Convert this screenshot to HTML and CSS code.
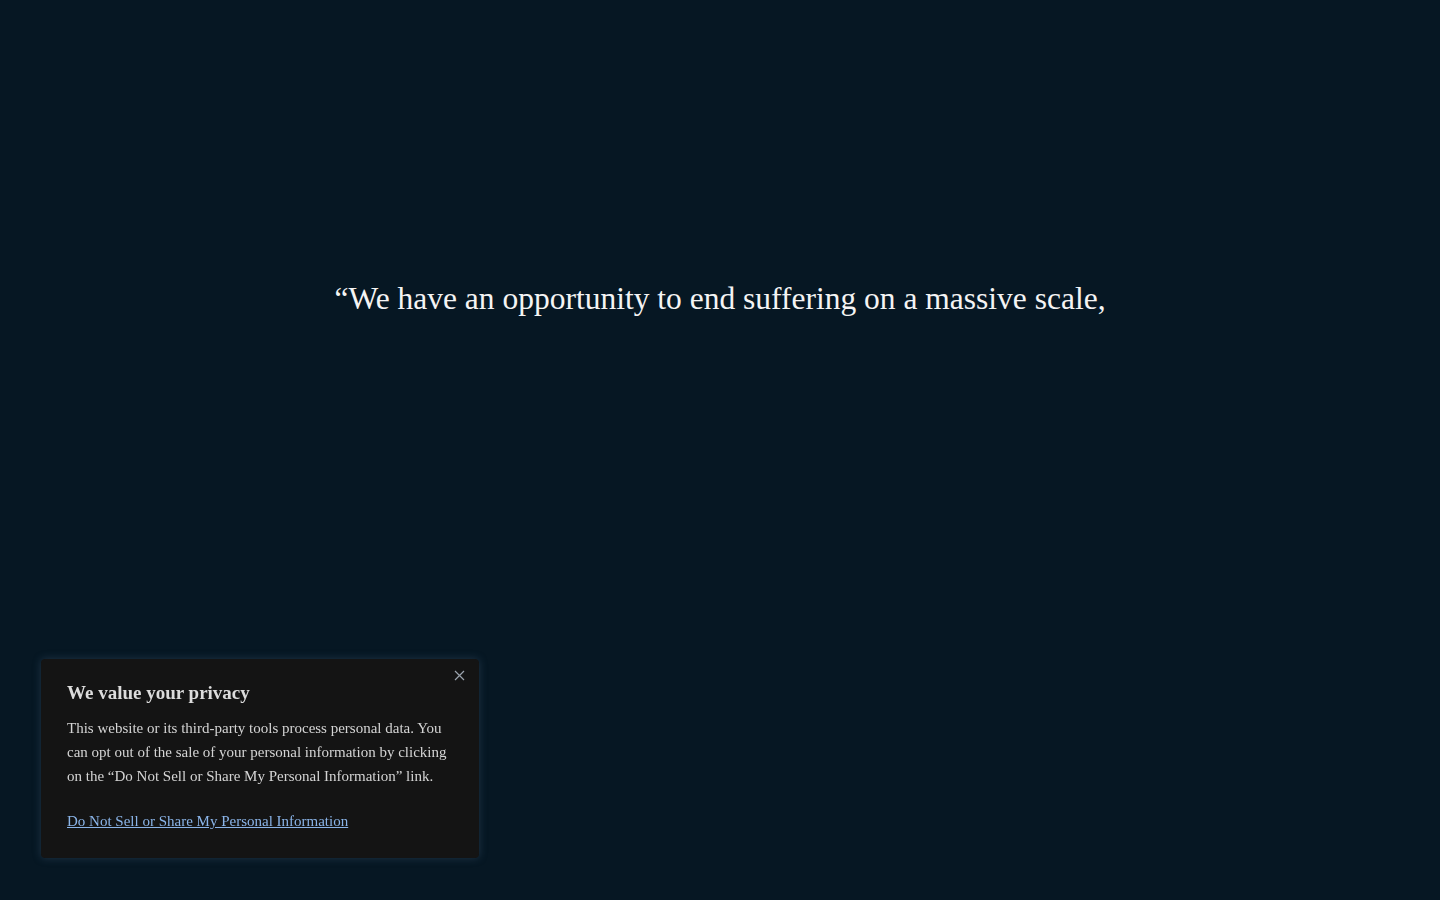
FILE: index.html
```html
<!DOCTYPE html>
<html lang="en">
  <head>
    <meta charset="UTF-8" />
    <meta name="viewport" content="width=device-width, initial-scale=1.0" />
    <title>Quote</title>
    <link rel="stylesheet" href="styles.css">
  </head>
  <body>
    <main class="hero">
      <p class="quote">&ldquo;We have an opportunity to end suffering on a massive scale,</p>
    </main>

    <div class="privacy" role="dialog" aria-label="Privacy">
      <button class="privacy-close" aria-label="Close">
        <svg width="11" height="11" viewBox="0 0 11 11">
          <path d="M1 1 L10 10 M10 1 L1 10" stroke="#9aa3ad" stroke-width="1.2" fill="none" />
        </svg>
      </button>
      <h2>We value your privacy</h2>
      <p>
        This website or its third-party tools process personal data. You
        can opt out of the sale of your personal information by clicking
        on the &ldquo;Do Not Sell or Share My Personal Information&rdquo; link.
      </p>
      <a href="#" class="privacy-link">Do Not Sell or Share My Personal Information</a>
    </div>
  </body>
</html>
```

FILE: styles.css
```css
/* page */
html,
body {
  height: 100%;
}

body {
  font-family: "Liberation Serif", "DejaVu Serif", serif;
  margin: 0;
  padding: 0;
  background: #061723;
  color: #f1f1f1;
}

.hero {
  padding-top: 276px;
  text-align: center;
}

.quote {
  margin: 0;
  font-size: 31.5px;
  line-height: 46px;
  color: #f4f4f4;
}

/* privacy banner */
.privacy {
  position: fixed;
  left: 41px;
  bottom: 42px;
  width: 438px;
  box-sizing: border-box;
  padding: 24px 26px 27px;
  background: #141414;
  border-radius: 4px;
  box-shadow: 0 0 8px rgba(80, 110, 140, 0.35);
  color: #d4d4d4;
}

.privacy h2 {
  margin: 0 0 13px;
  font-size: 19px;
  line-height: 20px;
  font-weight: bold;
  color: #dcdcdc;
}

.privacy p {
  margin: 0 0 23px;
  font-size: 15px;
  line-height: 24px;
}

.privacy-link {
  font-size: 15px;
  line-height: 20px;
  color: #8ab4e8;
  text-decoration: underline;
}

.privacy-close {
  position: absolute;
  top: 6px;
  right: 10px;
  width: 20px;
  height: 20px;
  padding: 0;
  border: none;
  background: none;
  cursor: pointer;
  display: flex;
  align-items: center;
  justify-content: center;
}
```
